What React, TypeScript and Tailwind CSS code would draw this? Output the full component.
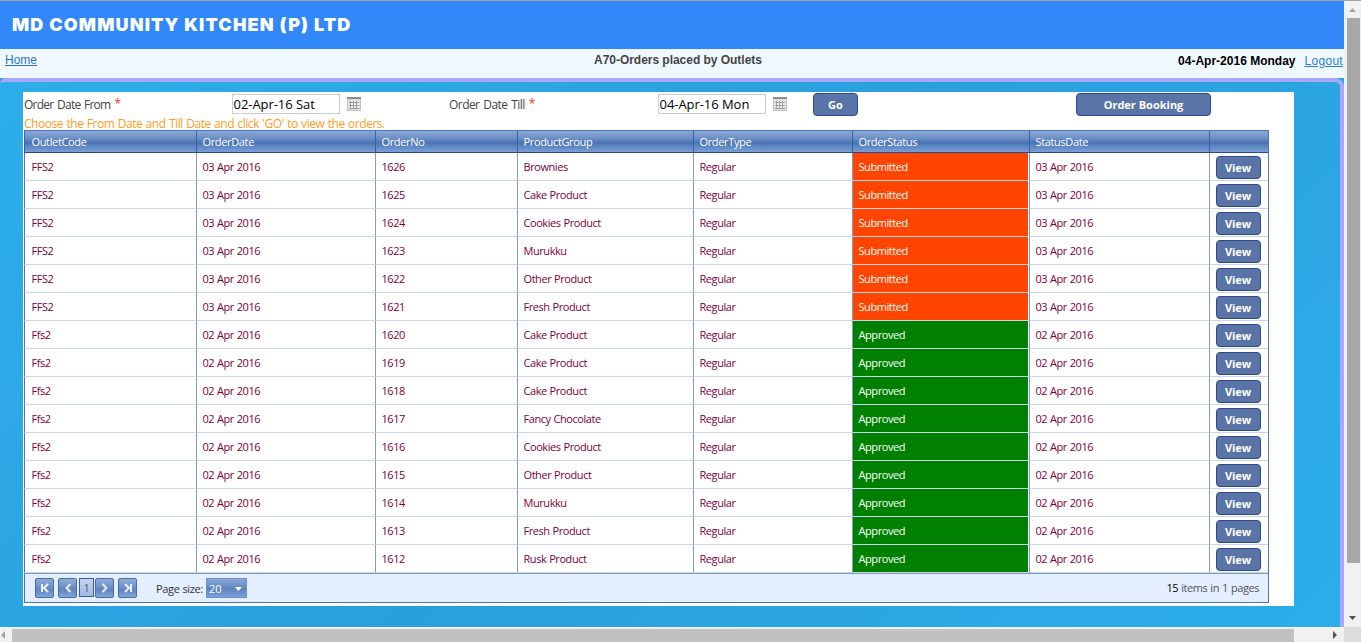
import React from "react";

const cols = "grid grid-cols-[172px_179px_142px_176px_159px_177px_180px_59px]";
const headers = [
  "OutletCode", "OrderDate", "OrderNo", "ProductGroup", "OrderType", "OrderStatus", "StatusDate", "",
];
const products = [
  "Brownies", "Cake Product", "Cookies Product", "Murukku", "Other Product", "Fresh Product",
  "Cake Product", "Cake Product", "Cake Product", "Fancy Chocolate", "Cookies Product",
  "Other Product", "Murukku", "Fresh Product", "Rusk Product",
];
const rows = products.map((product, i) => ({
  outlet: i < 6 ? "FFS2" : "Ffs2",
  date: i < 6 ? "03 Apr 2016" : "02 Apr 2016",
  no: String(1626 - i),
  product,
  submitted: i < 6,
}));

const ui = "font-['Open_Sans','Noto_Sans',sans-serif]";

function Btn({ children, className }: { children: React.ReactNode; className: string }) {
  return (
    <button className={`flex h-[23px] items-center justify-center rounded-[4px] border border-[#2b4a8b] bg-[#5b74a8] text-[11px] font-bold text-white ${className}`}>
      {children}
    </button>
  );
}

function Calendar() {
  return (
    <svg width="16" height="16" viewBox="0 0 16 16" shapeRendering="crispEdges">
      <rect x="1" y="1" width="14" height="14" fill="#c4c4c4" />
      <rect x="1" y="1" width="14" height="2" fill="#8c8c8c" />
      <rect x="2" y="3" width="12" height="11" fill="#dedede" />
      <rect x="3" y="5" width="10" height="8" fill="#f4f4f4" />
      <path d="M3 6.5h10M3 9.5h10M3 12.5h10M4.5 5v8M7.5 5v8M10.5 5v8" stroke="#999" fill="none" />
    </svg>
  );
}

function Field({ label, width, className }: { label: string; width: string; className: string }) {
  return (
    <label className={`flex pt-[4px] ${width}`}>
      <span className={className}>{label}</span>
      <span className="-mt-px ml-[4px] text-red-500">*</span>
    </label>
  );
}

function DateInput({ children }: { children: React.ReactNode }) {
  return (
    <div className="mt-[2px] h-5 w-[108px] border border-[#ccc] pl-[0.5px] text-[13px] leading-[19px] tracking-[-0.05px] text-black">
      {children}
    </div>
  );
}

function Cell({ children, first }: { children: React.ReactNode; first?: boolean }) {
  return (
    <div className={`flex items-center border-b border-l border-b-[#c9d5e8] pt-px ${first ? "border-l-[#4a74b2] pl-[6.5px]" : "border-l-[#829cbf] pl-[5.5px]"}`}>
      <span>{children}</span>
    </div>
  );
}

function PagerButton({ d, className }: { d: string; className?: string }) {
  return (
    <button className={`flex h-5 w-[19px] items-center justify-center rounded-[2px] border border-[#4a6ba3] bg-[linear-gradient(#8fadd8_0%,#6f8fc6_45%,#6283bf_60%,#82a6d9_100%)] ${className ?? ""}`}>
      <svg width="12" height="12" viewBox="0 0 12 12">
        <path d={d} fill="none" stroke="#eaf1fc" strokeWidth="2" />
      </svg>
    </button>
  );
}

export default function App() {
  return (
    <div className="flex h-[642px] w-[1361px] flex-col overflow-hidden border-t border-[#a3a3a3] font-['Liberation_Sans',sans-serif]">
      <div className="flex h-[626px]">
        <div className="flex w-[1344px] flex-col">
          <header className="flex h-12 items-center bg-[#3288f9] pb-[2px] pl-3">
            <h1 className="whitespace-nowrap font-['Inter','Liberation_Sans',sans-serif] text-[18px] font-black tracking-[1.13px] text-white">
              MD COMMUNITY KITCHEN (P) LTD
            </h1>
          </header>
          <nav className="grid h-[29px] grid-cols-[594px_1fr_auto] bg-[#f0f8ff] pr-px text-[12px] leading-[14px]">
            <a className="pl-[5px] pt-1 text-[#2a75c8] underline">Home</a>
            <b className="pt-1 tracking-[-0.03px] text-[#444]">A70-Orders placed by Outlets</b>
            <div className="flex gap-[9px] pt-[5px]">
              <b className="text-black">04-Apr-2016 Monday</b>
              <a className="tracking-[0.3px] text-[#2a7fd8] underline">Logout</a>
            </div>
          </nav>
          <main className="flex-1 bg-[#2ba9e6]">
            <div className="h-full rounded-tl-[6px] rounded-tr-[9px] border-r-4 border-t-4 border-[#a9a7f8] bg-[linear-gradient(135deg,#2caeea_0%,#2a9fdd_50%,#2caeea_100%)] pl-[23px] pt-[10px]">
              <section className={`h-[514px] w-[1271px] bg-white text-[#444] ${ui}`}>
                <div className="flex h-[25px] pl-px text-[12px]">
                  <Field label="Order Date From" width="w-[208px]" className="tracking-[-0.75px] [word-spacing:1.2px]" />
                  <DateInput>02-Apr-16 Sat</DateInput>
                  <span className="ml-[6px] w-[103px] pt-1"><Calendar /></span>
                  <Field label="Order Date Till" width="w-[209px]" className="tracking-[-0.55px] [word-spacing:1.2px]" />
                  <DateInput>04-Apr-16 Mon</DateInput>
                  <span className="ml-[6px] w-[41px] pt-1"><Calendar /></span>
                  <Btn className="mt-px w-[45px] pt-px">Go</Btn>
                  <Btn className="ml-[218px] mt-px w-[135px] pt-px">Order Booking</Btn>
                </div>
                <p className="h-[13px] whitespace-nowrap pl-px text-[12px] leading-[13px] tracking-[-0.46px] text-[#ff9c23] [word-spacing:0.7px]">
                  Choose the From Date and Till Date and click 'GO' to view the orders.
                </p>
                <div className="ml-px h-[473px] w-[1245px] border-b border-r border-t border-[#4a74b2] text-[11px] tracking-[-0.43px] [word-spacing:0.4px]">
                  <div className={`${cols} h-[22px] border-b border-[#2b4a8b] bg-[linear-gradient(#8aa8d6_0%,#6d8fc6_35%,#4a74b5_55%,#7a9fd6_100%)] tracking-[-0.35px] text-white`}>
                    {headers.map((h, i) => (
                      <div key={i} className={`flex items-center border-l border-[#3a62a6] pt-[2px] ${i ? "pl-[5.5px]" : "pl-[6.5px]"}`}>{h}</div>
                    ))}
                  </div>
                  {rows.map((r) => (
                    <div key={r.no} className={`${cols} h-7 text-[#800038]`}>
                      <Cell first>{r.outlet}</Cell>
                      <Cell>{r.date}</Cell>
                      <Cell>{r.no}</Cell>
                      <Cell>{r.product}</Cell>
                      <Cell>Regular</Cell>
                      <div className="border-b border-l border-b-[#c9d5e8] border-l-[#829cbf] pr-px text-white">
                        <div className={`flex h-full items-center pl-[5.5px] pt-px ${r.submitted ? "bg-[#ff4500]" : "bg-[#008000]"}`}>
                          {r.submitted ? "Submitted" : "Approved"}
                        </div>
                      </div>
                      <Cell>{r.date}</Cell>
                      <Cell><Btn className="w-[45px] pt-[2px] tracking-[-0.1px]">View</Btn></Cell>
                    </div>
                  ))}
                  <footer className="flex h-[29px] items-start border-l border-t border-l-[#4a74b2] border-t-[#829cbf] bg-[#e3eeff] pl-[10px] pr-[9px] pt-1 text-[#555]">
                    <PagerButton d="M3 2v8M9 2L5 6l4 4" />
                    <PagerButton className="ml-1" d="M8.5 2L4.5 6l4 4" />
                    <span className="ml-[2px] h-[19px] w-[15px] border border-[#3a5d9c] bg-[linear-gradient(#c3d4ee,#9fb9e0)] text-center leading-[18px]">1</span>
                    <PagerButton className="ml-px" d="M3.5 2l4 4-4 4" />
                    <PagerButton className="ml-1" d="M9 2v8M3 2l4 4-4 4" />
                    <span className="ml-[19px] w-[50px] whitespace-nowrap leading-[22px] tracking-[-0.35px] text-[#333]">Page size:</span>
                    <span className="flex h-5 w-[41px] items-center justify-between border border-[#6d8fc6] bg-[linear-gradient(#8aa8d6,#5f82bf_55%,#7a9fd6)] pl-[2px] pr-1 pt-[2px] tracking-normal text-white">
                      20
                      <svg width="7" height="4"><path d="M0 0h7L3.5 4z" fill="white" /></svg>
                    </span>
                    <span className="ml-auto leading-[20px] [word-spacing:0.6px]"><span className="text-black">15</span> items in 1 pages</span>
                  </footer>
                </div>
              </section>
            </div>
          </main>
        </div>
        <div className="flex w-[17px] flex-col items-center bg-[#f1f1f1]">
          <svg className="h-[17px] w-[17px]" viewBox="0 0 17 17"><path d="M5 11h7L8.5 7z" fill="#a3a3a3" /></svg>
          <div className="ml-px h-[545px] w-[13px] bg-[#a8a8a8]" />
          <svg className="mt-auto h-[17px] w-[17px]" viewBox="0 0 17 17"><path d="M5 6h7L8.5 10z" fill="#505050" /></svg>
        </div>
      </div>
      <div className="flex h-[15px] items-center bg-[#f1f1f1]">
        <svg width="12" height="15"><path d="M5 4v8L1 8z" fill="#a3a3a3" /></svg>
        <div className="mt-[2px] h-[13px] w-[1282px] bg-[#c1c1c1]" />
        <svg className="ml-auto" width="17" height="15"><path d="M6 4v8l4-4z" fill="#505050" /></svg>
        <div className="h-full w-[17px] bg-[#dcdcdc]" />
      </div>
    </div>
  );
}
